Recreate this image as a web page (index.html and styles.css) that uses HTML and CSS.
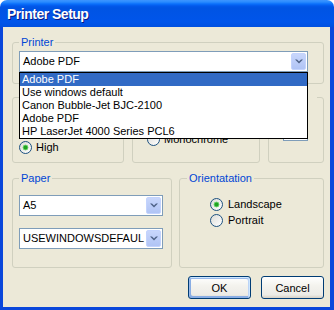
FILE: index.html
```html
<!DOCTYPE html>
<html lang="en">
<head>
    <meta charset="UTF-8">
    <title>Printer Setup</title>
    <link rel="stylesheet" href="styles.css">
</head>
<body>
    <div class="window">
        <div class="titlebar">
            <span class="title">Printer Setup</span>
        </div>
        <div class="frame">
            <div class="client">
                <fieldset class="group printer">
                    <legend>Printer</legend>
                    <div class="combo-wrap">
                        <div class="combo printer-combo">
                            <span class="combo-text">Adobe PDF</span>
                            <span class="combo-button">
                                <svg width="8" height="5" viewBox="0 0 8 5"><polygon points="0,0.5 2,0.5 4,2.5 6,0.5 8,0.5 4,4.5" fill="#4D6185"/></svg>
                            </span>
                        </div>
                        <ul class="list">
                            <li class="selected">Adobe PDF</li>
                            <li>Use windows default</li>
                            <li>Canon Bubble-Jet BJC-2100</li>
                            <li>Adobe PDF</li>
                            <li>HP LaserJet 4000 Series PCL6</li>
                        </ul>
                    </div>
                </fieldset>

                <!-- labels of this row sit under the open list -->
                <div class="options">
                    <fieldset class="group quality">
                        <legend class="blank"></legend>
                        <label class="radio"><input type="radio" name="quality" checked>High</label>
                    </fieldset>
                    <fieldset class="group color">
                        <legend class="blank"></legend>
                        <label class="radio"><input type="radio" name="color">Monochrome</label>
                    </fieldset>
                    <fieldset class="group copies">
                        <legend class="blank"></legend>
                        <div class="edit"></div>
                    </fieldset>
                </div>

                <div class="paper-row">
                    <fieldset class="group paper">
                        <legend>Paper</legend>
                        <div class="combo paper-combo">
                            <span class="combo-text">A5</span>
                            <span class="combo-button">
                                <svg width="8" height="5" viewBox="0 0 8 5"><polygon points="0,0.5 2,0.5 4,2.5 6,0.5 8,0.5 4,4.5" fill="#4D6185"/></svg>
                            </span>
                        </div>
                        <div class="combo paper-combo">
                            <span class="combo-text">USEWINDOWSDEFAUL</span>
                            <span class="combo-button">
                                <svg width="8" height="5" viewBox="0 0 8 5"><polygon points="0,0.5 2,0.5 4,2.5 6,0.5 8,0.5 4,4.5" fill="#4D6185"/></svg>
                            </span>
                        </div>
                    </fieldset>
                    <fieldset class="group orientation">
                        <legend>Orientatation</legend>
                        <label class="radio"><input type="radio" name="orient" checked>Landscape</label>
                        <label class="radio"><input type="radio" name="orient">Portrait</label>
                    </fieldset>
                </div>

                <div class="buttons">
                    <button class="default">OK</button>
                    <button>Cancel</button>
                </div>
            </div>
        </div>
    </div>
</body>
</html>
```

FILE: styles.css
```css
body {
    margin: 0;
    background: #fff;
    font-family: 'Liberation Sans', Arial, sans-serif;
    font-size: 11px;
    color: #000;
}

.window {
    width: 334px;
    height: 310px;
    display: flex;
    flex-direction: column;
}

.titlebar {
    height: 27px;
    flex: none;
    border-radius: 7px 7px 0 0;
    background: linear-gradient(180deg, #3d95ff 0, #2a8cff 2px, #0a6ffb 4px, #0258eb 6px, #0054e3 8px, #0055ea 22px, #0050e0 27px);
    display: flex;
    align-items: center;
    padding-left: 7px;
}

.title {
    color: #fff;
    font-weight: bold;
    font-size: 14px;
    letter-spacing: -0.5px;
    text-shadow: 1px 1px #0a1883;
    margin-top: 1px;
}

.frame {
    flex: 1;
    background: #0a47db;
    padding: 0 4px 3px 3px;
    display: flex;
}

.client {
    flex: 1;
    background: #ece9d8;
    padding: 9px 6px 8px 9px;
    display: flex;
    flex-direction: column;
}

.group {
    margin: 0;
    padding: 0 6px;
    border: 1px solid #d0d0bf;
    border-radius: 3px;
    min-width: 0;
    box-sizing: border-box;
}

.group legend {
    padding: 0 2px;
    line-height: 13px;
    color: #0046d5;
}

.group legend.blank {
    height: 13px;
    width: 30px;
}

.printer {
    padding-top: 2px;
    padding-bottom: 11px;
}

.combo-wrap {
    position: relative;
    width: 289px;
}

.combo {
    height: 21px;
    box-sizing: border-box;
    border: 1px solid #7f9db9;
    background: #fff;
    padding: 1px;
    display: flex;
}

.combo-text {
    flex: 1;
    padding-left: 2px;
    line-height: 17px;
    white-space: nowrap;
    overflow: hidden;
}

.combo-button {
    width: 15px;
    flex: none;
    box-sizing: border-box;
    border: 1px solid #c3d3fd;
    border-radius: 2px;
    background: linear-gradient(180deg, #c8d6fb 0%, #bccdf8 50%, #b0c4f5 100%);
    display: flex;
    align-items: center;
    justify-content: center;
}

.list {
    position: absolute;
    top: 21px;
    left: 0;
    width: 289px;
    box-sizing: border-box;
    margin: 0;
    padding: 0;
    list-style: none;
    background: #fff;
    border: 1px solid #000;
    z-index: 10;
}

.list li {
    height: 13px;
    line-height: 13px;
    padding-left: 2px;
    white-space: nowrap;
}

.list li.selected {
    background: #316ac5;
    color: #fff;
}

.options {
    margin-top: 7px;
    height: 72px;
    display: grid;
    grid-template-columns: 112px 128px 56px;
    gap: 8px;
}

.quality {
    padding-top: 35px;
}

.color {
    padding-top: 27px;
    padding-left: 14px;
}

.copies {
    padding-top: 16px;
    padding-left: 14px;
}

.edit {
    width: 25px;
    height: 21px;
    box-sizing: border-box;
    border: 1px solid #7f9db9;
    background: #fff;
}

.radio {
    display: flex;
    align-items: center;
    height: 16px;
    gap: 4px;
    white-space: nowrap;
}

.radio input {
    appearance: none;
    width: 13px;
    height: 13px;
    margin: 0;
    border: 1px solid #1c5180;
    border-radius: 50%;
    background: linear-gradient(135deg, #dcdcd7, #ffffff);
    flex: none;
}

.radio input:checked {
    background: radial-gradient(circle, #21a121 0 1.6px, #62cf62 2.2px 2.6px, transparent 3.2px), linear-gradient(135deg, #dcdcd7, #ffffff);
}

.paper-row {
    margin-top: 9px;
    height: 96px;
    display: grid;
    grid-template-columns: 160px 145px;
    gap: 7px;
}

.paper {
    padding-top: 10px;
}

.paper-combo {
    width: 144px;
}

.paper-combo + .paper-combo {
    margin-top: 12px;
}

.orientation {
    padding-top: 11px;
    padding-left: 7px;
}

.orientation .radio {
    margin-left: 23px;
    gap: 5px;
}

.buttons {
    margin-top: 8px;
    display: flex;
    justify-content: flex-end;
    gap: 10px;
}

button {
    width: 63px;
    height: 23px;
    font-family: 'Liberation Sans', Arial, sans-serif;
    font-size: 11px;
    color: #000;
    border: 1px solid #003c74;
    border-radius: 3px;
    background: linear-gradient(180deg, #ffffff 0%, #f4f3ee 40%, #ecebe6 85%, #d6d0c5 100%);
    padding: 0;
}

button.default {
    box-shadow: inset -1px 1px #cee7ff, inset 1px 2px #98b8ea, inset -2px 2px #bcd4f6, inset 1px -1px #89ade4, inset 2px -2px #89ade4;
}
```
